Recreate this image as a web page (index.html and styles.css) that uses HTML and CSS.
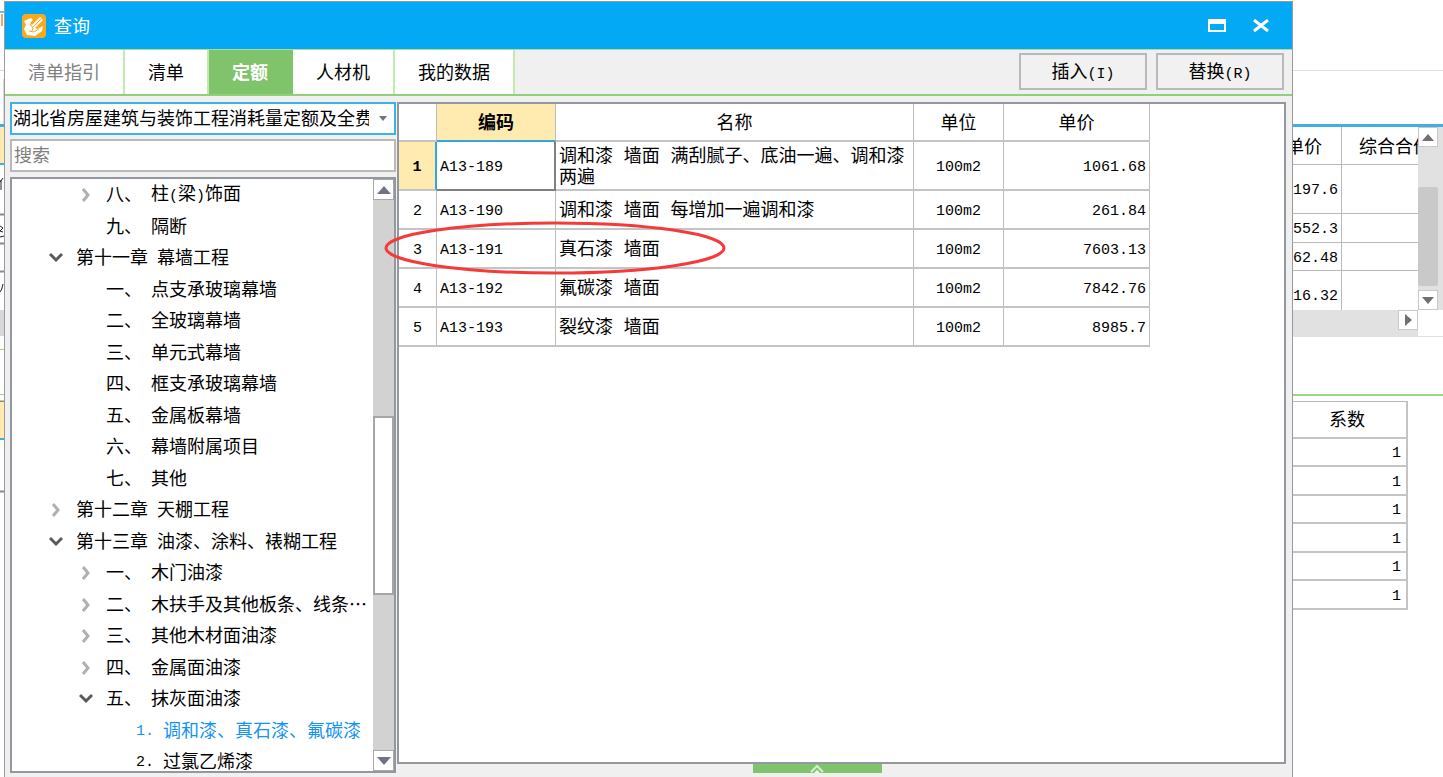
FILE: index.html
```html
<!DOCTYPE html>
<html lang="zh-CN">
<head>
<meta charset="utf-8">
<title>查询</title>
<link rel="stylesheet" href="styles.css">
</head>
<body>
<div class="desktop">
  <svg class="left-edge" viewBox="0 0 4 777" width="4" height="777" aria-hidden="true">
    <path d="M0 12h4" stroke="#7db7dc" stroke-width="2"/>
    <path d="M2 14v12" stroke="#f0a868" stroke-width="2"/>
    <path d="M0 70.500h4M3.500 79v45" stroke="#d8d8d8" fill="none"/>
    <rect y="124" width="4" height="3" fill="#3daee4"/>
    <rect y="127" width="4" height="36" fill="#ffebb0"/>
    <rect y="163" width="4" height="2" fill="#3daee4"/>
    <path d="M0 182l3-4M1 180v10M0 226l3 2-3 3 3 1M0 237l4-1M3 284q-1 6-3 8" stroke="#222" fill="none"/>
    <path d="M0 214.500h4M0 243.500h4M0 271.500h4M0 401.500h4M0 491.500h4" stroke="#8a8a8a" stroke-width="2"/>
    <rect y="310" width="4" height="26" fill="#d8d8d8"/>
    <path d="M0 349.500h4M0 394.500h4" stroke="#9bd682"/>
    <rect y="402" width="4" height="36" fill="#ffebb0"/>
    <rect y="438" width="4" height="2" fill="#3daee4"/>
  </svg>

  <main class="dialog">
    <header class="titlebar">
      <svg class="app-icon" viewBox="0 0 24 24" width="24" height="24" aria-hidden="true">
        <rect width="24" height="24" rx="4" fill="#fba81c"/>
        <path d="M2 7l7-3 2 2-3 3 2 2 8-8 3 3-8 8 2 1 6-3-1 5-7 5-8-1-3-6 2-4z" fill="#fff"/>
        <path d="M11 13l8-8M8 10l3 4-1 3M7 17l5 1 5-3" fill="none" stroke="#fba81c"/>
      </svg>
      <h1>查询</h1>
      <div class="window-buttons">
        <button type="button" aria-label="最大化"><svg viewBox="0 0 18 14" width="18" height="14"><path d="M1 1h16v11H1z" fill="none" stroke="#fff" stroke-width="2"/><path d="M1 1h16v4H1z" fill="#fff"/></svg></button>
        <button type="button" aria-label="关闭"><svg viewBox="0 0 18 14" width="18" height="14"><path d="M2 1l14 11M16 1L2 12" stroke="#fff" stroke-width="3"/></svg></button>
      </div>
    </header>

    <nav class="toolbar">
      <button type="button" class="tab tab-muted">清单指引</button>
      <button type="button" class="tab">清单</button>
      <button type="button" class="tab tab-active">定额</button>
      <button type="button" class="tab">人材机</button>
      <button type="button" class="tab">我的数据</button>
      <div class="actions">
        <button type="button" class="action">插入<span class="key">(I)</span></button>
        <button type="button" class="action">替换<span class="key">(R)</span></button>
      </div>
    </nav>

    <div class="content">
      <aside class="sidebar">
        <div class="combo">
          <select aria-label="定额库"><option>湖北省房屋建筑与装饰工程消耗量定额及全费用基价表</option></select>
          <svg class="combo-arrow" viewBox="0 0 8 5" width="8" height="5" aria-hidden="true"><path d="M0 0h8L4 5z" fill="#6f7484"/></svg>
        </div>
        <input class="search" type="text" placeholder="搜索" aria-label="搜索">
        <div class="tree-box">
          <ul class="tree">
            <li class="level-2"><button type="button" class="twisty" aria-label="展开"><svg viewBox="0 0 12 14" width="12" height="14"><path d="M3 1l5 6-5 6" class="closed"/></svg></button><span>八、</span><span>柱<span class="key">(</span>梁<span class="key">)</span>饰面</span></li>
            <li class="level-2"><span>九、</span><span>隔断</span></li>
            <li class="level-1"><button type="button" class="twisty" aria-label="收起"><svg viewBox="0 0 14 12" width="14" height="12"><path d="M1 2l6 6 6-6" class="open"/></svg></button><span>第十一章</span><span>幕墙工程</span></li>
            <li class="level-2"><span>一、</span><span>点支承玻璃幕墙</span></li>
            <li class="level-2"><span>二、</span><span>全玻璃幕墙</span></li>
            <li class="level-2"><span>三、</span><span>单元式幕墙</span></li>
            <li class="level-2"><span>四、</span><span>框支承玻璃幕墙</span></li>
            <li class="level-2"><span>五、</span><span>金属板幕墙</span></li>
            <li class="level-2"><span>六、</span><span>幕墙附属项目</span></li>
            <li class="level-2"><span>七、</span><span>其他</span></li>
            <li class="level-1"><button type="button" class="twisty" aria-label="展开"><svg viewBox="0 0 12 14" width="12" height="14"><path d="M3 1l5 6-5 6" class="closed"/></svg></button><span>第十二章</span><span>天棚工程</span></li>
            <li class="level-1"><button type="button" class="twisty" aria-label="收起"><svg viewBox="0 0 14 12" width="14" height="12"><path d="M1 2l6 6 6-6" class="open"/></svg></button><span>第十三章</span><span>油漆、涂料、裱糊工程</span></li>
            <li class="level-2"><button type="button" class="twisty" aria-label="展开"><svg viewBox="0 0 12 14" width="12" height="14"><path d="M3 1l5 6-5 6" class="closed"/></svg></button><span>一、</span><span>木门油漆</span></li>
            <li class="level-2"><button type="button" class="twisty" aria-label="展开"><svg viewBox="0 0 12 14" width="12" height="14"><path d="M3 1l5 6-5 6" class="closed"/></svg></button><span>二、</span><span>木扶手及其他板条、线条⋯</span></li>
            <li class="level-2"><button type="button" class="twisty" aria-label="展开"><svg viewBox="0 0 12 14" width="12" height="14"><path d="M3 1l5 6-5 6" class="closed"/></svg></button><span>三、</span><span>其他木材面油漆</span></li>
            <li class="level-2"><button type="button" class="twisty" aria-label="展开"><svg viewBox="0 0 12 14" width="12" height="14"><path d="M3 1l5 6-5 6" class="closed"/></svg></button><span>四、</span><span>金属面油漆</span></li>
            <li class="level-2"><button type="button" class="twisty" aria-label="收起"><svg viewBox="0 0 14 12" width="14" height="12"><path d="M1 2l6 6 6-6" class="open"/></svg></button><span>五、</span><span>抹灰面油漆</span></li>
            <li class="level-3 selected"><span class="key">1.</span><span>调和漆、真石漆、氟碳漆</span></li>
            <li class="level-3"><span class="key">2.</span><span>过氯乙烯漆</span></li>
          </ul>
          <div class="scrollbar">
            <button type="button" aria-label="向上滚动"><svg viewBox="0 0 14 8" width="14" height="8"><path d="M0 8l7-8 7 8z"/></svg></button>
            <div class="track"><div class="thumb"></div></div>
            <button type="button" aria-label="向下滚动"><svg viewBox="0 0 14 8" width="14" height="8"><path d="M0 0l7 8 7-8z"/></svg></button>
          </div>
        </div>
      </aside>

      <section class="results">
        <div class="grid-box">
          <table class="grid">
            <colgroup><col class="c-index"><col class="c-code"><col class="c-name"><col class="c-unit"><col class="c-price"></colgroup>
            <thead><tr><th></th><th class="current">编码</th><th>名称</th><th>单位</th><th>单价</th></tr></thead>
            <tbody>
              <tr class="tall"><th class="current">1</th><td class="focus">A13-189</td><td class="name">调和漆 墙面 满刮腻子、底油一遍、调和漆两遍</td><td class="unit">100m2</td><td class="price">1061.68</td></tr>
              <tr><th>2</th><td>A13-190</td><td class="name">调和漆 墙面 每增加一遍调和漆</td><td class="unit">100m2</td><td class="price">261.84</td></tr>
              <tr><th>3</th><td>A13-191</td><td class="name">真石漆 墙面</td><td class="unit">100m2</td><td class="price">7603.13</td></tr>
              <tr><th>4</th><td>A13-192</td><td class="name">氟碳漆 墙面</td><td class="unit">100m2</td><td class="price">7842.76</td></tr>
              <tr><th>5</th><td>A13-193</td><td class="name">裂纹漆 墙面</td><td class="unit">100m2</td><td class="price">8985.7</td></tr>
            </tbody>
          </table>
        </div>
        <button type="button" class="drawer" aria-label="展开明细"><svg viewBox="0 0 16 9" width="16" height="9"><path d="M2 8l6-6 6 6" fill="none" stroke="#d6f0cb" stroke-width="2"/><path d="M5 9l3-3 3 3z" fill="#fff"/></svg></button>
        <svg class="marker" viewBox="0 0 342 54" width="342" height="54" aria-hidden="true"><ellipse cx="171" cy="27" rx="169" ry="25" fill="none" stroke="#f53a3a" stroke-width="3"/></svg>
      </section>
    </div>
  </main>

  <aside class="backdrop">
    <div class="ribbon"></div>
    <div class="upper">
      <div class="upper-view">
        <table class="rear">
          <colgroup><col class="r-price"><col></colgroup>
          <thead><tr><th><span class="cut">单价</span></th><th class="total">综合合价</th></tr></thead>
          <tbody>
            <tr class="h49"><td>197.6</td><td></td></tr>
            <tr class="h29"><td>552.3</td><td></td></tr>
            <tr class="h28"><td>62.48</td><td></td></tr>
            <tr class="h49"><td>16.32</td><td></td></tr>
          </tbody>
        </table>
      </div>
      <div class="flat-scroll">
        <button type="button" aria-label="向上滚动"><svg viewBox="0 0 12 7" width="12" height="7"><path d="M0 7l6-7 6 7z"/></svg></button>
        <div class="flat-track"><div class="flat-thumb"></div></div>
        <button type="button" aria-label="向下滚动"><svg viewBox="0 0 12 7" width="12" height="7"><path d="M0 0l6 7 6-7z"/></svg></button>
      </div>
    </div>
    <div class="flat-hscroll">
      <div class="hbar"><button type="button" aria-label="向右滚动"><svg viewBox="0 0 7 12" width="7" height="12"><path d="M0 0l7 6-7 6z"/></svg></button></div>
    </div>
    <div class="lower">
      <table class="factor">
        <thead><tr><th>系数</th></tr></thead>
        <tbody>
          <tr><td>1</td></tr><tr><td>1</td></tr><tr><td>1</td></tr><tr><td>1</td></tr><tr><td>1</td></tr><tr><td>1</td></tr>
        </tbody>
      </table>
    </div>
  </aside>
</div>
</body>
</html>
```

FILE: styles.css
```css
* { box-sizing: border-box; }

body {
  margin: 0;
  overflow: hidden;
  background: #fff;
  color: #000;
  font: 18px/22px "Liberation Mono", "Noto Sans CJK SC", monospace;
}

button, input, select {
  margin: 0;
  padding: 0;
  border: 0;
  border-radius: 0;
  background: none;
  color: inherit;
  font: inherit;
}

svg { display: block; }

ul { margin: 0; padding: 0; list-style: none; }

table { border-collapse: separate; border-spacing: 0; table-layout: fixed; }

th { font-weight: 400; padding: 0; }

.key { font-size: 15px; }

.desktop {
  display: grid;
  grid-template-columns: 4px minmax(0, 1fr) 150px;
  height: 100vh;
  overflow: hidden;
}

/* Query window */

.dialog {
  display: flex;
  flex-direction: column;
  min-height: 0;
  height: calc(100vh - 1px);
  margin-top: 1px;
  border: 1px solid #9a9a9a;
  border-bottom: 0;
  background: #f0f0f0;
}

.titlebar {
  display: flex;
  align-items: center;
  flex: none;
  gap: 8px;
  height: 47px;
  padding: 0 22px 0 17px;
  background: #03a9f4;
  color: #fff;
}

.titlebar h1 { margin: 0; padding-top: 4px; font-size: 18px; font-weight: 400; }

.window-buttons { display: flex; gap: 26px; margin-left: auto; }

.toolbar {
  display: flex;
  flex: none;
  height: 47px;
  border-top: 1px solid #a9dd98;
  border-bottom: 2px solid #8fd17a;
}

.tab {
  padding: 4px 23px 0;
  border-right: 2px solid #c0eaae;
  background: #fff;
}

.tab-muted { color: #808080; }

.tab-active {
  border-right-color: #7fc36a;
  background: #7fc36a;
  color: #fff;
  font-weight: 700;
}

.actions { display: flex; gap: 9px; margin-left: auto; padding: 3px 8px 4px 0; }

.action { width: 128px; padding-top: 4px; border: 2px solid #b9b9b9; background: #f1f1f1; }

.content {
  display: flex;
  flex: 1;
  gap: 1px;
  min-height: 0;
  padding: 6px 6px 4px 5px;
}

.sidebar {
  display: flex;
  flex: none;
  flex-direction: column;
  width: 386px;
}

.combo { position: relative; flex: none; height: 33px; }

.combo select {
  width: 100%;
  height: 100%;
  padding: 3px 25px 0 1px;
  border: 2px solid #3db2e6;
  background: #fff;
  appearance: none;
}

.combo-arrow { position: absolute; top: 14px; right: 9px; }

.search {
  flex: none;
  height: 33px;
  margin-top: 4px;
  padding: 3px 2px 0;
  border: 2px solid #b9b9b9;
  background: #fff;
}

.search::placeholder { color: #808080; opacity: 1; }

.tree-box {
  display: flex;
  flex: 1;
  min-height: 0;
  margin-top: 5px;
  border: 2px solid #9297a0;
  background: #fff;
  overflow: hidden;
}

.tree { flex: 1; min-width: 0; white-space: nowrap; }

.tree li {
  display: flex;
  align-items: center;
  gap: 9px;
  height: 32px;
}

.tree li:nth-child(even) { height: 31px; }

.tree li > span { padding-top: 2px; }

.level-1 { padding-left: 64px; }
.level-2 { padding-left: 94px; }
.level-3 { padding-left: 124px; }

.selected { color: #1593f5; }

.twisty {
  display: grid;
  place-items: center;
  width: 16px;
  height: 16px;
  margin-left: -28px;
  margin-right: 3px;
}

.closed, .open { fill: none; stroke-width: 3; }
.closed { stroke: #b0b0b0; }
.open { stroke: #5a5a5a; }

.scrollbar {
  display: flex;
  flex: none;
  flex-direction: column;
  width: 21px;
  background: #d2d2d2;
}

.scrollbar button {
  display: grid;
  place-items: center;
  height: 21px;
  border: 1px solid #a8a8a8;
  background: #fff;
}

.scrollbar path { fill: #6f7484; }

.track {
  display: flex;
  flex: 1;
  flex-direction: column;
  padding-top: 216px;
}

.thumb { height: 179px; border: 2px solid #a6a6a6; background: #fff; }

.results { display: flex; position: relative; flex: 1; flex-direction: column; min-width: 0; }

.grid-box {
  flex: 1;
  min-height: 0;
  border: 2px solid #9297a0;
  background: #fff;
  overflow: hidden;
}

.grid { width: 751px; }

.c-index { width: 38px; }
.c-code { width: 119px; }
.c-name { width: 358px; }
.c-unit { width: 90px; }
.c-price { width: 146px; }

.grid th, .grid td {
  height: 39px;
  padding: 4px 3px 0;
  border-right: 1px solid #bdbdbd;
  border-bottom: 2px solid #c4c4c4;
}

.grid thead th { height: 38px; }

.grid tbody th, .grid td { font-size: 15px; }

.grid .tall th, .grid .tall td { height: 49px; }

.grid .name { font-size: 18px; line-height: 21px; }
.grid .unit { text-align: center; }
.grid .price { text-align: right; }

.grid .current { background: #ffebb0; font-weight: 700; }
.grid thead .current { border-bottom-color: #31a7dc; }
.grid tbody .current { border-right: 2px solid #31a7dc; }
.grid .focus { border-right: 2px solid #808080; border-bottom-color: #808080; }

.drawer {
  display: grid;
  place-items: center;
  flex: none;
  width: 129px;
  height: 9px;
  margin-left: 40%;
  background: #7fc36a;
}

.marker { position: absolute; top: 119px; left: -13px; }

/* Main window behind */

.backdrop { min-width: 0; }

.ribbon {
  height: 127px;
  border-bottom: 3px solid #43afe0;
  background: linear-gradient(#dedede, #dedede) 0 70px / 100% 1px no-repeat;
}

.upper { display: flex; height: 183px; background: #e1e1e1; }

.upper-view { flex: 1; min-width: 0; background: #fff; overflow: hidden; }

.rear { width: 100%; }

.r-price { width: 49px; }

.rear th, .rear td {
  height: 38px;
  padding: 4px 3px 0 0;
  border-right: 1px solid #b9b9b9;
  border-bottom: 1px solid #b9b9b9;
  overflow: hidden;
  white-space: nowrap;
}

.rear td { font-size: 15px; text-align: right; }
.rear th:last-child, .rear td:last-child { border-right: 0; }
.rear .total { padding-left: 17px; text-align: left; }
.rear .h49 td { height: 49px; }
.rear .h29 td { height: 29px; }
.rear .h28 td { height: 28px; }

.cut { display: flex; justify-content: flex-end; padding-right: 16px; }

.flat-scroll {
  display: flex;
  flex: none;
  flex-direction: column;
  width: 21px;
  margin-right: 4px;
}

.flat-scroll button, .hbar button {
  display: grid;
  place-items: center;
  width: 20px;
  height: 20px;
  border: 1px solid #c8c8c8;
  background: #fff;
}

.flat-scroll path, .hbar path { fill: #707070; }

.flat-track { flex: 1; padding-top: 40px; }

.flat-thumb { width: 20px; height: 99px; border-radius: 2px; background: #c9c9c9; }

.flat-hscroll { height: 27px; padding-right: 25px; border-bottom: 1px solid #e1e1e1; }

.hbar { display: flex; justify-content: flex-end; height: 26px; background: #e1e1e1; }

.lower {
  margin-top: 57px;
  padding: 5px 35px 0 0;
  border-top: 2px solid #9bd682;
}

.factor { width: 100%; border-top: 1px solid #b9b9b9; }

.factor th, .factor td {
  height: 28px;
  padding: 4px 5px 0 0;
  border-right: 2px solid #c4c4c4;
  border-bottom: 2px solid #c4c4c4;
}

.factor th { height: 37px; padding-top: 2px; }
.factor td { font-size: 15px; text-align: right; }
.factor tr:nth-child(even) td { height: 29px; }
```
